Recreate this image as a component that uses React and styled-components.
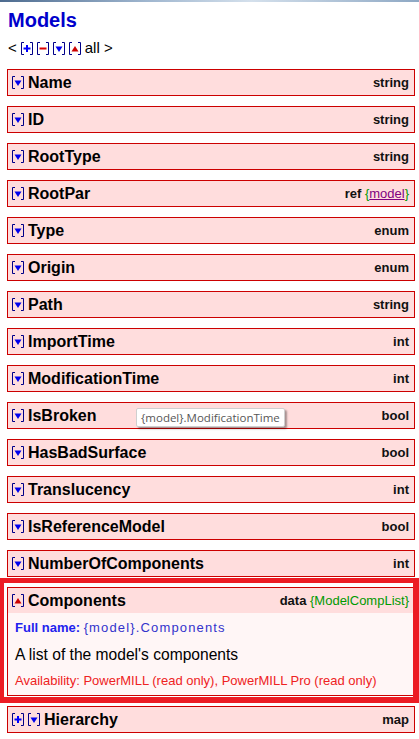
import React from "react";
import styled, { createGlobalStyle } from "styled-components";

const Global = createGlobalStyle`
  html, body { margin: 0; padding: 0; background: #ffffff; overflow: hidden; }
  body { font-family: "Liberation Sans", Arial, sans-serif; color: #000; }
`;

const Page = styled.div`
  position: relative;
  width: 419px;
  min-height: 739px;
  overflow: hidden;
`;

const TopEdge = styled.div`
  height: 2px;
  background: linear-gradient(90deg, #4d6b8f 0%, #9fb6cf 35%, #d4e0ec 60%, #8ea8c4 100%);
`;

const Title = styled.h1`
  margin: 6px 0 0 0;
  padding-left: 8px;
  font-size: 20px;
  line-height: 24px;
  font-weight: bold;
  color: #0000cc;
`;

const Nav = styled.div`
  margin-top: 7px;
  padding-left: 8px;
  height: 18px;
  display: flex;
  align-items: center;
  gap: 4px;
  font-size: 15px;
  line-height: 18px;
`;

const List = styled.div`
  margin-top: 12px;
  padding: 0 4px 0 7px;
  display: flex;
  flex-direction: column;
  gap: 10px;
`;

const Row = styled.div`
  position: relative;
  border: 1px solid #cc0000;
  background: #ffdddd;

  ${(p) =>
    p.$focused &&
    `
    &::after {
      content: "";
      position: absolute;
      top: -10px;
      left: -8px;
      right: -5px;
      bottom: -8px;
      border-style: solid;
      border-color: #ec1c24;
      border-width: 5px 6px 6px 4px;
      pointer-events: none;
    }
  `}
`;

const Header = styled.div`
  height: 25px;
  display: flex;
  align-items: center;
  padding: 0 5px 0 4px;
`;

const Toggles = styled.div`
  display: flex;
  gap: 4px;
  margin-right: 4px;
`;

const Name = styled.span`
  font-size: 16px;
  line-height: 19px;
  font-weight: bold;
  flex: 1;
  white-space: nowrap;
`;

const TypeLabel = styled.span`
  font-size: 13px;
  line-height: 19px;
  font-weight: bold;
  color: #111;
  white-space: nowrap;
`;

const Brace = styled.span`
  font-weight: normal;
  color: #009900;
`;

const RefLink = styled.span`
  color: #800080;
  text-decoration: underline;
`;

const Details = styled.div`
  background: #fff6f6;
  padding: 6px 7px 6px 7px;
`;

const FullName = styled.div`
  font-size: 13px;
  line-height: 18px;
  color: #2222ee;
  font-weight: bold;
`;

const FullNameValue = styled.span`
  font-weight: normal;
  letter-spacing: 1.15px;
  color: #3333cc;
`;

const Description = styled.div`
  margin-top: 8px;
  font-size: 15.6px;
  line-height: 20px;
  color: #000;
`;

const Availability = styled.div`
  margin-top: 8px;
  font-size: 13px;
  line-height: 16px;
  color: #ee2222;
`;

const Tooltip = styled.div`
  position: absolute;
  left: 136px;
  top: 408px;
  height: 17px;
  padding: 0 4px;
  border: 1px solid #cfcfcf;
  border-radius: 2px;
  background: #ffffff;
  box-shadow: 2px 2px 2px rgba(0, 0, 0, 0.35);
  font-family: "Open Sans", "Noto Sans", sans-serif;
  font-size: 11.5px;
  line-height: 17px;
  color: #575757;
  white-space: nowrap;
`;

const IconSvg = styled.svg`
  display: block;
  flex: none;
  width: 12px;
  height: 13px;
`;

function ToggleIcon({ kind }) {
  let inner = null;
  if (kind === "plus") {
    inner = (
      <g fill="#0000ff">
        <rect x="5" y="3" width="2" height="7" />
        <rect x="2.5" y="5.5" width="7" height="2" />
      </g>
    );
  } else if (kind === "minus") {
    inner = <rect x="2.5" y="5.5" width="7" height="2" fill="#dd0000" />;
  } else if (kind === "down") {
    inner = <path d="M2.5 4.5H9.5L6 10Z" fill="#0000ee" />;
  } else if (kind === "up") {
    inner = <path d="M2.5 9.5H9.5L6 4Z" fill="#cc0000" />;
  }
  return (
    <IconSvg viewBox="0 0 12 13">
      <path d="M3 0.5H0.5V12.5H3M9 0.5H11.5V12.5H9" fill="none" stroke="#000088" strokeWidth="1" />
      {inner}
    </IconSvg>
  );
}

const rows = [
  { name: "Name", type: "string" },
  { name: "ID", type: "string" },
  { name: "RootType", type: "string" },
  { name: "RootPar", type: "ref", link: "model" },
  { name: "Type", type: "enum" },
  { name: "Origin", type: "enum" },
  { name: "Path", type: "string" },
  { name: "ImportTime", type: "int" },
  { name: "ModificationTime", type: "int" },
  { name: "IsBroken", type: "bool" },
  { name: "HasBadSurface", type: "bool" },
  { name: "Translucency", type: "int" },
  { name: "IsReferenceModel", type: "bool" },
  { name: "NumberOfComponents", type: "int" },
];

export default function App() {
  return (
    <Page>
      <Global />
      <TopEdge />
      <Title>Models</Title>
      <Nav>
        <span>&lt;</span>
        <ToggleIcon kind="plus" />
        <ToggleIcon kind="minus" />
        <ToggleIcon kind="down" />
        <ToggleIcon kind="up" />
        <span>all &gt;</span>
      </Nav>
      <List>
        {rows.map((r) => (
          <Row key={r.name}>
            <Header>
              <Toggles>
                <ToggleIcon kind="down" />
              </Toggles>
              <Name>{r.name}</Name>
              <TypeLabel>
                {r.type}
                {r.link && (
                  <>
                    {" "}
                    <Brace>
                      {"{"}
                      <RefLink>{r.link}</RefLink>
                      {"}"}
                    </Brace>
                  </>
                )}
              </TypeLabel>
            </Header>
          </Row>
        ))}
        <Row $focused>
          <Header>
            <Toggles>
              <ToggleIcon kind="up" />
            </Toggles>
            <Name>Components</Name>
            <TypeLabel>
              data <Brace>{"{ModelCompList}"}</Brace>
            </TypeLabel>
          </Header>
          <Details>
            <FullName>
              Full name: <FullNameValue>{"{model}.Components"}</FullNameValue>
            </FullName>
            <Description>A list of the model's components</Description>
            <Availability>Availability: PowerMILL (read only), PowerMILL Pro (read only)</Availability>
          </Details>
        </Row>
        <Row>
          <Header>
            <Toggles>
              <ToggleIcon kind="plus" />
              <ToggleIcon kind="down" />
            </Toggles>
            <Name>Hierarchy</Name>
            <TypeLabel>map</TypeLabel>
          </Header>
        </Row>
      </List>
      <Tooltip>{"{model}.ModificationTime"}</Tooltip>
    </Page>
  );
}
